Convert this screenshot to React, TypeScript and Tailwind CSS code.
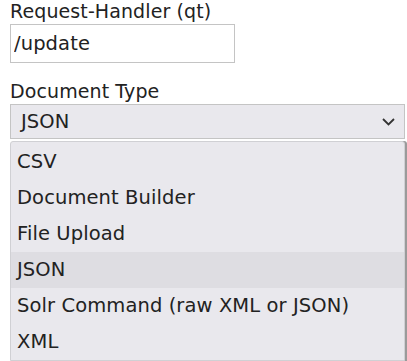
import React from 'react';

const options = ['CSV', 'Document Builder', 'File Upload', 'JSON', 'Solr Command (raw XML or JSON)', 'XML'];

export default function App() {
  const selected = 'JSON';

  return (
    <div className="relative h-[361px] w-[407px] overflow-hidden bg-white pl-[10px] text-[19.5px] tracking-[0.1px] text-[#222] [font-family:'DejaVu_Sans',Verdana,sans-serif]">
      <label className="block h-[24px] text-[19px] leading-[22px] tracking-[0.1px]">Request-Handler (qt)</label>
      <input
        readOnly
        value="/update"
        className="block h-[39px] w-[225px] border border-[#c4c4c4] bg-white px-[3px] text-[19.5px] tracking-[0.1px] text-[#222] outline-none"
      />
      <label className="mt-[17px] block h-[24px] text-[19px] leading-[22px] tracking-[0.1px]">Document Type</label>
      <div className="flex h-[35px] w-[395px] items-center justify-between border border-[#c4c4c4] bg-[#e9e8ed] pl-[10px] pr-[9px]">
        <span>{selected}</span>
        <svg width="13" height="8" viewBox="0 0 13 8" fill="none" className="mt-[1px]">
          <path d="M1 1l5.5 5.5L12 1" stroke="#333" strokeWidth="1.8" />
        </svg>
      </div>
      <div className="absolute left-[10px] top-[141px] w-[395px] rounded-t-[3px] border border-[#d0d0d4] bg-[#e9e8ed] pt-[2px] shadow-[2px_0_0_#9a9a9a]">
        {options.map((o) => (
          <div
            key={o}
            className={`flex h-[36px] items-center pl-[6px] ${o === selected ? 'bg-[#dedde2]' : ''}`}
          >
            {o}
          </div>
        ))}
      </div>
    </div>
  );
}
